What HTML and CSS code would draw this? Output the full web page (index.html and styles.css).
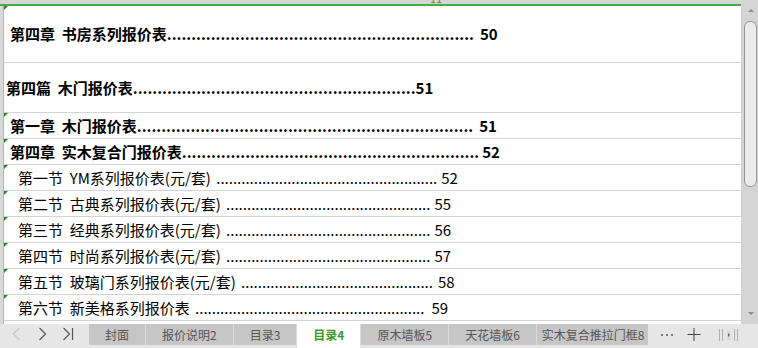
FILE: index.html
```html
<!DOCTYPE html>
<html lang="zh">
<head>
  <meta charset="UTF-8">
  <meta name="viewport" content="width=device-width, initial-scale=1.0">
  <title>目录4</title>
  <link rel="stylesheet" href="styles.css">
</head>
<body>
  <div class="app">
    <div class="workspace">
      <div class="grid">
        <div class="col-head"><span class="col-label">11</span></div>
        <div class="body">
          <div class="row-head"></div>
          <div class="cells">
            <div class="row mark bold h57 pad-chap">
              <span class="title">第四章  书房系列报价表</span><span class="lead">...............................................................</span><span class="page m6">50</span>
            </div>
            <div class="row bold h50 pad-part">
              <span class="title">第四篇  木门报价表</span><span class="lead">..........................................................</span><span class="page m0">51</span>
            </div>
            <div class="row mark bold pad-chap">
              <span class="title">第一章  木门报价表</span><span class="lead">.....................................................................</span><span class="page m6">51</span>
            </div>
            <div class="row mark bold pad-chap">
              <span class="title">第四章  实木复合门报价表</span><span class="lead">.............................................................</span><span class="page m3">52</span>
            </div>
            <div class="row mark pad-sec">
              <span class="title">第一节  YM系列报价表(元/套) </span><span class="lead">.....................................................</span><span class="page m4">52</span>
            </div>
            <div class="row mark pad-sec">
              <span class="title">第二节  古典系列报价表(元/套) </span><span class="lead">.................................................</span><span class="page m4">55</span>
            </div>
            <div class="row mark pad-sec">
              <span class="title">第三节  经典系列报价表(元/套) </span><span class="lead">.................................................</span><span class="page m4">56</span>
            </div>
            <div class="row mark pad-sec">
              <span class="title">第四节  时尚系列报价表(元/套) </span><span class="lead">.................................................</span><span class="page m4">57</span>
            </div>
            <div class="row mark pad-sec">
              <span class="title">第五节  玻璃门系列报价表(元/套) </span><span class="lead">..............................................</span><span class="page m5">58</span>
            </div>
            <div class="row mark pad-sec">
              <span class="title">第六节  新美格系列报价表 </span><span class="lead">.......................................................</span><span class="page m7">59</span>
            </div>
          </div>
        </div>
      </div>
      <div class="vscroll">
        <div class="arrow-up"></div>
        <div class="thumb"></div>
        <div class="arrow-down"></div>
      </div>
    </div>

    <div class="tabbar">
      <div class="nav">
        <svg width="89" height="21" viewBox="0 0 89 21">
          <polyline points="19.5,4 13.5,10 19.5,16" fill="none" stroke="#c9c9c9" stroke-width="1.2"/>
          <polyline points="39.5,4 45.5,10 39.5,16" fill="none" stroke="#555" stroke-width="1.2"/>
          <polyline points="63.5,4 69.5,10 63.5,16" fill="none" stroke="#555" stroke-width="1.2"/>
          <line x1="72.5" y1="4" x2="72.5" y2="16" stroke="#555" stroke-width="1.2"/>
        </svg>
      </div>
      <div class="tab first">封面</div>
      <div class="tab">报价说明2</div>
      <div class="tab">目录3</div>
      <div class="tab active">目录4</div>
      <div class="tab">原木墙板5</div>
      <div class="tab">天花墙板6</div>
      <div class="tab last">实木复合推拉门框8</div>
      <div class="tools">
        <svg width="113" height="21" viewBox="0 0 113 21">
          <circle cx="14" cy="11" r="1" fill="#555"/>
          <circle cx="19" cy="11" r="1" fill="#555"/>
          <circle cx="24" cy="11" r="1" fill="#555"/>
          <line x1="39.5" y1="10.5" x2="52.5" y2="10.5" stroke="#444" stroke-width="1"/>
          <line x1="46" y1="4" x2="46" y2="17" stroke="#444" stroke-width="1"/>
          <line x1="71.5" y1="5" x2="71.5" y2="17" stroke="#b0b0b0" stroke-width="1"/>
          <line x1="74.5" y1="5" x2="74.5" y2="17" stroke="#b0b0b0" stroke-width="1"/>
          <rect x="79" y="7" width="3" height="9" fill="#d8d8d8"/>
          <polygon points="80,9 82,11 80,13" fill="#666"/>
          <line x1="86.5" y1="5" x2="86.5" y2="17" stroke="#b0b0b0" stroke-width="1"/>
          <line x1="89.5" y1="5" x2="89.5" y2="17" stroke="#b0b0b0" stroke-width="1"/>
        </svg>
      </div>
    </div>
  </div>
</body>
</html>
```

FILE: styles.css
```css
body {
  margin: 0;
  background-color: #fff;
  font-family: "Noto Sans CJK SC", "Liberation Sans", sans-serif;
}

.app {
  width: 758px;
  height: 348px;
  display: flex;
  flex-direction: column;
  overflow: hidden;
}

.workspace {
  display: flex;
  height: 324px;
}

.grid {
  flex: 1;
  min-width: 0;
  display: flex;
  flex-direction: column;
}

.col-head {
  height: 4px;
  background-color: #d6d6d6;
  border-bottom: 2px solid #4aa64a;
  overflow: hidden;
  display: flex;
  align-items: flex-end;
}
.col-label {
  margin-left: 430px;
  font-size: 11px;
  line-height: 11px;
  color: #3d9a3d;
}

.body {
  flex: 1;
  display: flex;
}
.row-head {
  width: 3px;
  background-color: #d8d8d8;
  border-right: 1px solid #b6b6b6;
}
.cells {
  flex: 1;
}

/* toc rows */
.row {
  position: relative;
  box-sizing: border-box;
  height: 26px;
  display: flex;
  align-items: center;
  border-bottom: 1px solid #d4d4d4;
  font-size: 15px;
  line-height: 20px;
  color: #000;
  white-space: pre;
}
.row.h57 { height: 57px; }
.row.h50 { height: 50px; }
.row.bold { font-weight: 700; }
.row.mark::before {
  content: "";
  position: absolute;
  left: 0;
  top: 0;
  border-top: 4px solid #1f8a1f;
  border-right: 4px solid transparent;
}
.pad-chap { padding-left: 6px; }
.pad-part { padding-left: 2px; }
.pad-sec { padding-left: 14px; }
.pad-sec .lead { margin-left: 2px; }

.page { margin-left: 5px; }
.page.m0 { margin-left: 0; }
.page.m3 { margin-left: 3px; }
.page.m4 { margin-left: 4px; }
.page.m5 { margin-left: 5px; }
.page.m6 { margin-left: 6px; }
.page.m7 { margin-left: 7px; }

/* vertical scrollbar */
.vscroll {
  width: 17px;
  box-sizing: border-box;
  padding: 0 1px 0 3px;
  background-color: #d4d4d4;
  display: flex;
  flex-direction: column;
  align-items: center;
}
.arrow-up {
  margin-top: 9px;
  border-left: 3px solid transparent;
  border-right: 3px solid transparent;
  border-bottom: 3px solid #8a8a8a;
}
.thumb {
  margin-top: 9px;
  width: 13px;
  height: 166px;
  box-sizing: border-box;
  background-color: #ebebeb;
  border: 1px solid #959595;
  border-radius: 6px;
}
.arrow-down {
  margin-top: auto;
  margin-bottom: 9px;
  border-left: 3px solid transparent;
  border-right: 3px solid transparent;
  border-top: 3px solid #8a8a8a;
}

/* sheet tabs */
.tabbar {
  height: 24px;
  box-sizing: border-box;
  padding-bottom: 3px;
  display: flex;
  background-color: #e6e6e6;
  font-size: 12px;
}
.nav {
  width: 89px;
  flex: none;
  display: flex;
}
.tab {
  flex: none;
  display: flex;
  align-items: center;
  padding: 0 16px;
  background-color: #c6c6c6;
  color: #555;
  border-left: 1px solid #dcdcdc;
}
.tab.first { border-left: none; }
.tab.active {
  margin-bottom: -3px;
  padding-bottom: 3px;
  background-color: #fff;
  color: #3c9a2c;
  font-weight: 700;
}
.tab.last {
  box-sizing: border-box;
  width: 112px;
  padding: 0 0 0 5px;
  overflow: hidden;
}
.tools {
  flex: none;
  display: flex;
}
```
